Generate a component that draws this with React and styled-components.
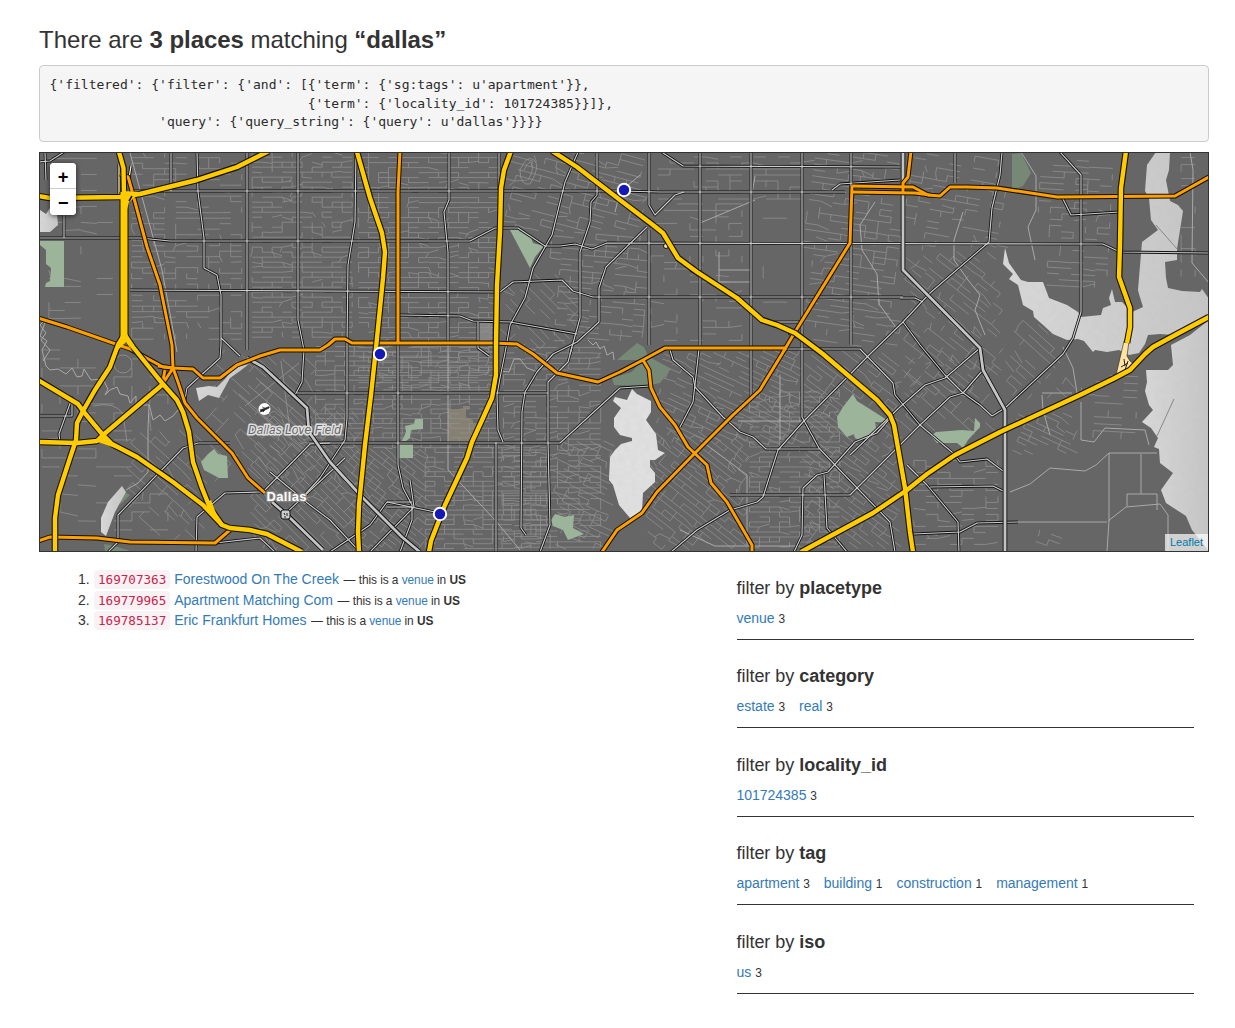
import React from 'react';
import styled, { createGlobalStyle } from 'styled-components';

const Global = createGlobalStyle`
  * { box-sizing: border-box; }
  body {
    margin: 0;
    background: #fff;
    color: #333;
    font: 14px/20px "Liberation Sans", Arial, sans-serif;
  }
`;

const Page = styled.main`
  width: 1170px;
  margin: 26px 0 0 39px;
`;
const Title = styled.h1`
  margin: 0;
  height: 39px;
  font-size: 24px;
  line-height: 28px;
  font-weight: 400;
  letter-spacing: -0.03px;
  white-space: nowrap;
`;
const Query = styled.pre`
  margin: 0 0 10px;
  height: 77px;
  padding: 10px 9.5px;
  border: 1px solid #ccc;
  border-radius: 4px;
  background: #f5f5f5;
  color: #2b2b2b;
  font: 13px/18.57px "DejaVu Sans Mono", monospace;
`;
const MapBox = styled.section`
  position: relative;
  height: 400px;
  border: 1px solid #333;
  background: #666;
  overflow: hidden;
`;
const MapArt = styled.svg`
  display: block;
  width: 1168px;
  height: 398px;
`;
const ZoomControl = styled.div`
  position: absolute;
  left: 10px;
  top: 10px;
  width: 26px;
  border-radius: 4px;
  background: #fff;
  box-shadow: 0 1px 5px rgba(0, 0, 0, 0.65);
  overflow: hidden;
`;
const ZoomButton = styled.button`
  display: block;
  width: 26px;
  height: 26px;
  padding: 2px 0 0;
  border: 0;
  border-bottom: ${(p) => (p.$divided ? '1px solid #ccc' : '0')};
  background: #fff;
  color: #000;
  font: bold 17px/22px "DejaVu Sans Mono", monospace;
  text-align: center;
`;
const MinusButton = styled(ZoomButton)`
  padding: 0;
`;
const Attribution = styled.div`
  position: absolute;
  right: 0;
  bottom: 0;
  width: 43px;
  height: 17px;
  padding-left: 5px;
  background: rgba(255, 255, 255, 0.7);
  color: #0078a8;
  font-size: 11px;
  line-height: 17px;
`;
const Columns = styled.div`
  display: grid;
  grid-template-columns: 682.5px 487.5px;
`;
const Results = styled.ol`
  margin: 0;
  padding: 17px 15px 0 55px;
  list-style: none;
`;
const Result = styled.li`
  display: flex;
  align-items: baseline;
  height: 20.5px;
  line-height: 20px;
  white-space: pre;
`;
const Index = styled.span`
  width: 16px;
  margin-left: -16px;
`;
const PlaceId = styled.code`
  margin-right: 4px;
  padding: 2px 4px;
  border-radius: 4px;
  background: #f9f2f4;
  color: #c7254e;
  font: 12.6px/15px "DejaVu Sans Mono", monospace;
`;
const Link = styled.a`
  color: #337ab7;
`;
const Small = styled.small`
  font-size: 11.9px;
`;
const Description = styled(Small)`
  margin-left: 4.6px;
  letter-spacing: -0.06px;
`;
const Filters = styled.aside`
  padding: 26.1px 15px 0;
`;
const Filter = styled.section`
  height: 88.4px;
`;
const FilterTitle = styled.h4`
  margin: 0 0 10px;
  font-size: 18px;
  line-height: 20px;
  font-weight: 400;
  letter-spacing: -0.03px;
`;
const Terms = styled.div`
  display: flex;
  gap: 14px;
  height: 32px;
  border-bottom: 1px solid #333;
  letter-spacing: -0.02px;
  white-space: pre;
`;

/* Highway geometry, in page pixels. */
const motorways = [
  '119,152 123.5,168 124,197 124,335 118,345 110,367 95,390 83,411 77,423 76,440 70,458 58,495 55,518 55,552',
  '125,335 133,347 145,362 162,383 177,400 183,412 189,432 193,462 202,488 210,508 222,525 230,528 250,530 267,534 302,552',
  '38,196 50,198 120,197 140,194 197,180 237,167 269,151',
  '38,380 78,404 83,411 103,435 112,444 137,457 173,482 203,505 222,525',
  '38,442 77,443 97,441 103,435 162,385',
  '357,152 370,198 382,233 385,252 383,278 376,348 371,395 365,445 359,505 358,532 359,552',
  '511,151 504,170 501,188 500,232 497,285 496,345 496,375 492,398 483,418 472,442 467,458 445,505 431,541 429,552',
  '552,151 577,167 620,200 653,225 663,233 678,258 697,272 737,298 762,320 777,325 795,333 823,354 850,377 877,400 890,415 894,425 905,488 910,532 913,552',
  '1209,317 1177,334 1153,347 1145,354 1130,370 1113,379 1080,395 1000,432 955,455 927,474 907,490 873,513 801,552',
  '1126,151 1121,188 1120,245 1119,277 1130,308 1130,327 1127,343',
];
const trunks = [
  '38,318 67,327 130,349 163,367 173,368 193,369 203,378 220,378 237,365 260,356 280,350 320,350 328,345 335,339 345,339 352,343 493,343 517,344 533,354 557,373 598,382 620,372 643,360 665,348 787,348',
  '120,174 128,177 129,180 135,202 147,247 160,285 172,345 173,368 178,382 185,403 197,418 232,453 248,478 265,493',
  '400,151 398,192 398,342',
  '911,151 908,177 903,183 903,193',
  '852,186 913,187 928,195 940,196 950,187 967,187 997,188 1057,197 1175,196 1209,177',
  '852,192 915,193 930,195',
  '852,186 850,243 795,332 782,354 760,390 733,415 695,453 657,492 642,513 617,530 602,552',
  '643,360 649,370 651,388 660,407 675,425 688,447 707,465 711,483 727,502 752,545 752,552',
  '38,541 50,537 97,538 130,542 215,543 230,530',
  '165,370 162,385 173,368 158,366',
];
const arterials = [
  '130,191 620,191 660,192 845,192', '38,238 140,238 170,241 470,241 495,228 518,228 545,246 560,246 575,244 592,249 607,243 1103,244 1120,252 1209,253',
  '130,290 500,292 513,282 562,280 573,291 593,297 903,297', '400,315 460,316 473,321 510,322 577,334',
  '297,393 548,393', '309,443 560,443 620,388 650,386', '660,151 683,166 900,167',
  '171,152 171,191', '197,152 198,192 204,238 204,268 217,275 221,295 221,345 220,358 187,388 184,405', '221,338 240,356',
  '247,152 247,350', '298,152 298,320 304,350 302,382 294,397', '356,152 355,222 348,265 347,345 347,418 345,440 320,478 300,500',
  '449,152 449,200 444,212 448,252 448,345', '398,345 398,465 403,488 412,505 412,520 400,552',
  '578,152 565,182 552,235 533,268 525,298 510,325 505,353 500,378 497,395 498,430 503,442', '496,442 496,552', '499,152 499,190',
  '597,152 597,195 591,202 590,222 580,252 580,318 570,354', '647,227 606,267 599,288 599,322 577,342 553,354 537,372 525,392 522,412 521,528 526,535',
  '649,152 649,205 655,215 675,195 684,192', '649,230 649,345', '700,152 700,345', '751,152 751,398', '802,152 802,417 819,448 835,465 890,522 895,552',
  '851,152 851,345', '955,152 955,183', '1002,152 1000,175 992,208 989,242 930,293 903,322 870,354 803,422 778,450 763,497 757,502 730,510 697,530 671,552',
  '1060,152 1081,175 1081,312 1073,338 1063,354 1005,408 992,416 980,405 962,392 945,375 920,345 903,322',
  '980,348 945,378 925,385 900,407 850,455', '983,370 963,393 950,397 920,425 850,495 730,495',
  '787,349 860,349 893,383 895,395 920,425 953,453 960,462 987,459 1003,471',
  '670,350 673,360 693,377 695,387 723,417 740,432 753,437 766,449 819,449', '699,349 693,402 680,427',
  '892,416 877,433 855,442 828,472 817,475 803,488 802,535 794,552', '824,475 827,528 847,552',
  '907,465 927,485 958,522 959,552', '930,487 993,486 1003,491', '913,534 960,532 977,523 1018,522',
  '230,443 198,443 183,448 118,515 118,542 108,552', '38,416 72,416 72,398 59,434 60,442', '260,492 225,493 197,517 196,552',
  '263,492 310,444 330,443', '270,472 310,505 330,520 360,552', '285,514 345,458', '435,512 387,502 370,525 330,552',
  '410,480 414,507 370,552', '387,502 412,502', '387,507 412,507', '572,347 568,362 548,382 548,442 550,525 540,552', '38,162 50,161 64,152',
  '45,152 46,180', '64,190 64,238', '215,543 260,538 275,552', '1062,197 1071,215 1120,212', '478,322 478,348 489,356', '900,298 915,298 923,302', '832,190 840,184 900,180', '775,322 800,322',
];
const boulevards = [
  '247,358 263,367 307,408 309,432 330,462 363,498 402,537 420,552', '903,152 903,270 980,348 983,370 1005,410 1005,552',
  '272,502 287,515 323,550',
];
const streams = [
  '46,320 40,336 47,341 42,350 46,366 50,370 58,369 66,374 72,368 77,377 82,376 84,369 91,380 103,379 108,389 105,395 110,390 117,387 120,394 128,396 130,403 136,396 136,404',
  '143,405 149,405 148,430 148,472 138,483 126,490', '45,320 40,325 46,333 41,340 50,350 43,361',
  '1190,152 1193,170 1192,263 1209,283', '130,153 162,270 177,352', '1021,152 1036,176 1036,210 1028,227 1035,260',
  '963,212 954,240 954,260 968,280 980,295 975,310 985,335', '875,202 860,225 862,250 877,274 879,304 895,326',
  '149,404 153,420 160,415 165,421 173,416 178,410 184,411', '588,340 593,345 596,342 600,349 604,346 607,355 613,352 614,360',
  '448,345 448,470 495,520 520,550',
  '500,371 509,372 514,359 520,359 527,368 538,372', '1063,347 1073,368 1077,393',
  '1108,521 1126,507 1160,504 1168,515 1168,551', '1127,506 1127,494 1157,494 1157,510', '1018,522 1107,522',
  '1042,393 1072,393', '1042,395 1043,410 1050,435', '1081,402 1081,440 1094,442 1105,428 1145,430 1149,445',
  '700,440 747,475 747,545', '780,375 780,440', '738,421 803,421', '680,530 715,546 800,546',
  '1010,492 1030,484 1050,468 1085,471 1096,465 1109,453 1157,453', '1109,453 1109,521 1107,551', '1141,454 1141,494',
  '700,223 755,200', '640,175 620,192 615,212', '755,176 751,200', '719,252 719,282 733,282 750,282', '719,270 750,270',
];
const water = [
  '1156,152 1170,152 1169,170 1166,180 1170,201 1178,205 1183,211 1180,230 1177,249 1177,260 1165,262 1166,278 1168,288 1182,291 1200,292 1202,289 1209,299 1209,315 1174,335 1160,334 1148,335 1145,344 1139,353 1129,355 1119,350 1107,352 1095,350 1093,352 1084,341 1078,339 1067,340 1053,334 1042,324 1034,317 1033,311 1023,305 1018,285 1009,279 1013,274 1003,264 1005,248 1009,263 1021,280 1028,282 1043,282 1049,298 1067,305 1078,312 1081,317 1101,315 1103,308 1111,305 1109,298 1112,289 1115,302 1122,302 1132,312 1143,307 1139,294 1138,290 1142,242 1158,230 1151,220 1149,198 1145,191 1147,165',
  '1209,320 1190,335 1171,345 1173,365 1168,370 1146,370 1147,382 1145,391 1149,405 1153,410 1142,422 1151,428 1158,438 1154,447 1159,449 1160,463 1173,473 1161,490 1166,503 1186,516 1192,530 1209,551',
  '196,388 209,386 217,387 226,378 233,368 249,364 240,371 230,378 219,398 208,395 199,401',
  '122,486 126,492 115,512 106,536 101,532 101,518 108,502', '40,210 46,214 50,208 57,214 58,225 50,232 40,232',
];
const whiteRock = '632,389 637,394 651,401 651,412 646,420 656,434 658,450 665,453 655,460 650,460 650,467 655,473 655,482 643,493 642,511 630,518 619,505 613,485 609,480 610,457 615,450 621,444 632,441 632,438 620,435 614,427 614,418 621,408 613,401 615,397 627,400';
const parks = [
  ['510,230 518,230 531,238 533,243 544,246 535,257 530,268'], ['40,241 64,241 64,287 45,287 46,283 50,281 51,268 46,264 46,250 40,245'],
  ['853,394 857,401 873,411 887,420 889,423 875,422 877,433 867,437 859,440 855,438 854,434 847,437 838,427 837,417 843,407'], ['931,436 936,432 962,430 974,431 975,418 980,423 980,427 968,440 963,448 957,443 937,443'],
  ['201,462 208,454 214,449 218,454 227,456 228,478 219,478 204,470'], ['402,441 406,432 405,426 414,424 415,419 423,419 423,429 411,430 410,438 406,441'],
  ['399,444 413,444 413,458 399,458'], ['551,520 555,514 565,517 574,515 573,528 584,534 568,540 563,530 553,526'],
  ['617,360 637,343 644,347 648,356 671,369 660,383 645,386 614,385 612,378 632,372 642,360', 1],
  ['1012,154 1021,153 1031,173 1023,186 1018,188 1012,188', 1], ['123,491 130,495 120,505', 1], ['104,544 115,546 130,551 105,551', 1],
];

/* Blocks of local streets: left, top, width, height, grid angle, pitch, share of blocks that are built up. */
const districts = [
  [40, 152, 84, 175, 0, 8, 0.28], [130, 152, 116, 190, 0, 5.5, 0.48], [247, 152, 110, 190, 0, 5, 0.74],
  [357, 152, 142, 240, 0, 5, 0.76], [500, 152, 150, 80, 15, 6, 0.66], [550, 232, 100, 110, 5, 5.5, 0.64],
  [500, 270, 80, 80, 45, 7, 0.5], [650, 152, 152, 50, 0, 6, 0.55], [650, 200, 100, 145, 0, 6.5, 0.38], [750, 200, 52, 110, 0, 12, 0.3],
  [802, 152, 100, 195, 8, 6, 0.66], [903, 152, 105, 100, 10, 6, 0.5], [903, 250, 100, 150, 38, 6, 0.6],
  [1038, 160, 80, 130, 3, 6, 0.58], [1180, 152, 28, 135, 0, 7, 0.5], [1005, 320, 70, 80, 42, 7, 0.45],
  [40, 345, 140, 200, 0, 9, 0.28], [125, 430, 85, 110, 42, 7, 0.5], [205, 350, 115, 135, 42, 8, 0.45],
  [250, 405, 110, 146, 45, 5.5, 0.78], [310, 345, 190, 105, 0, 4.8, 0.82], [350, 445, 80, 106, 38, 5, 0.82],
  [425, 445, 130, 106, 0, 4.8, 0.86], [500, 345, 110, 205, 0, 5.4, 0.75], [550, 440, 65, 110, 25, 6, 0.7],
  [655, 350, 150, 95, 25, 5.5, 0.7], [645, 430, 105, 120, 38, 5.5, 0.78], [745, 390, 95, 160, 0, 5, 0.78],
  [802, 350, 100, 200, 37, 5.5, 0.72], [910, 455, 92, 95, 0, 6, 0.53], [1010, 410, 68, 46, 25, 5, 0.65],
  [1080, 375, 65, 65, 3, 7, 0.4], [1030, 524, 35, 26, 20, 6, 0.5], [900, 350, 100, 90, 42, 8, 0.4],
];

function streetPath([x, y, w, h, angle, pitch, density], seed) {
  let state = seed * 7919 + 17;
  const random = () => {
    state = (state * 16807) % 2147483647;
    return state / 2147483647;
  };
  const a = (angle * Math.PI) / 180;
  const c = Math.cos(a);
  const s = Math.sin(a);
  const r = Math.hypot(w, h) / 2;
  const at = (u, v) => [x + w / 2 + u * c - v * s, y + h / 2 + u * s + v * c];
  const inside = ([px, py]) => px >= x && px <= x + w && py >= y && py <= y + h;
  const step = pitch * 2;
  let d = '';
  const line = (p, q) => {
    if (inside(p) && inside(q)) d += `M${p.map((n) => n.toFixed(1))}L${q.map((n) => n.toFixed(1))}`;
  };
  for (let v = -r; v < r; v += pitch) {
    for (let u = -r; u < r; u += step) {
      const bend = random() < 0.16 ? (random() - 0.5) * pitch * 1.5 : 0;
      if (random() < density) line(at(u, v), at(u + step, v + bend));
      if (random() < density * 0.48) line(at(u, v), at(u + bend, v + pitch));
    }
  }
  return d;
}

function Lines({ items, stroke, width, ...rest }) {
  return (
    <g fill="none" stroke={stroke} strokeWidth={width} strokeLinejoin="round" {...rest}>
      {items.map((points, i) => <polyline key={i} points={points} />)}
    </g>
  );
}

function DallasMap() {
  return (
    <MapArt viewBox="40 153 1168 398" role="img" aria-label="Map of Dallas">
      <defs>
        <linearGradient id="lake" x1="0" x2="1">
          <stop offset="0" stopColor="#d8d8d8" />
          <stop offset="0.6" stopColor="#cdcdcd" />
          <stop offset="1" stopColor="#c5c5c5" />
        </linearGradient>
        <filter id="grain" x="0" y="0" width="100%" height="100%">
          <feTurbulence type="fractalNoise" baseFrequency="0.16" numOctaves="2" seed="4" result="noise" />
          <feColorMatrix in="noise" type="matrix" values="0 0 0 0 0.5  0 0 0 0 0.5  0 0 0 0 0.5  0.28 0 0 0 -0.09" result="shade" />
          <feComposite in="shade" in2="SourceGraphic" operator="in" result="tint" />
          <feMerge><feMergeNode in="SourceGraphic" /><feMergeNode in="tint" /></feMerge>
        </filter>
      </defs>
      <rect x="40" y="153" width="1168" height="398" fill="#666" />
      <path d="M448 409h15v-3h7v3h-4v8l7 3v4h5l-7 19h-23z" fill="#858071" />
      <rect x="479" y="322" width="13" height="20" fill="#858585" />
      <g fill="none" stroke="#929292" strokeWidth="0.75">
        {districts.map((zone, i) => <path key={i} d={streetPath(zone, i + 1)} />)}
      </g>
      <g fill="none" stroke="#969696" strokeWidth="0.8">
        <path d="M248 385l74 64M239 394l74 64M256 378l67 56M245 406l54-43M290 430l-9-69" />
        <circle cx="123" cy="364" r="9" /><path d="M93 406q22-5 30 8l4 28" />
        <path d="M520 170q7-16 14-10t-4 24q-10 2-10-14m4 0q6-12 8-6t-4 16" />
      </g>
      {parks.map(([points, dark]) => <polygon key={points} points={points} fill={dark ? '#768976' : '#9bb49a'} />)}
      <Lines items={streams} stroke="#a9a9a9" width={1} />
      <g filter="url(#grain)">{water.map((p) => <polygon key={p} points={p} fill="url(#lake)" />)}</g>
      <polygon points={whiteRock} fill="#e0e0e0" filter="url(#grain)" />
      <path d="M1156 225l22 25M1174 399l-17 37" fill="none" stroke="#888" />
      <Lines items={arterials} stroke="#111" width={2.8} />
      <Lines items={arterials} stroke="#cecece" width={1.15} />
      <Lines items={boulevards} stroke="#111" width={4.6} />
      <Lines items={boulevards} stroke="#c4c4c4" width={2.8} />
      <rect x="281" y="510" width="9" height="9" rx="2" fill="#ccc" stroke="#111" />
      <path d="M284 513l1 2m2-2v3m-3 1h2" stroke="#222" />
      <path d="M119 164v34M131 166l-2 12" fill="none" stroke="#111" strokeWidth="3" />
      <path d="M119 164v34M131 166l-2 12" fill="none" stroke="#ffe9b8" strokeWidth="1.3" />
      <path d="M1124 341h5l-2 15 3 5 5 4-10 6-9 4z" fill="#ffe3a0" stroke="#222" strokeWidth="0.6" />
      <path d="M1124 359l1 7m3-5l-3 9m-4-3l7-4" stroke="#222" fill="none" />
      <g stroke="#111" strokeWidth="1" fill="#ffe3a0"><circle cx="666" cy="246" r="2.5" /><path d="M690 271l8 5M788 334l8 4 4-5" /></g>
      <Lines items={trunks} stroke="#151000" width={5} />
      <Lines items={trunks} stroke="#ff9f00" width={3} />
      <Lines items={motorways} stroke="#151000" width={6.6} />
      <polyline points="124,192 124,338" stroke="#151000" strokeWidth="9" />
      <Lines items={motorways} stroke="#fc0" width={4.4} />
      <polyline points="124,192 124,338" stroke="#fc0" strokeWidth="7" />
      <path d="M122 191l20 1-13 10-3 11zM94 441l9-8 10 12 5 4-14-5zM118 350l6-17 8 18-6-9zM207 502l4-2 8 21-8-8z" fill="#fc0" />
      <path d="M129 201l3-5" stroke="#111" strokeWidth="1.5" />
      <circle cx="264.5" cy="409" r="6" fill="#fff" />
      <path d="M260 410l8-3q2-1 1 1l-4 2-2 2v-1l-3 1 1-2zM262 407l3 1" fill="#222" stroke="#222" strokeWidth="0.6" />
      <g fontFamily="Liberation Sans, Arial, sans-serif" strokeLinejoin="round" paintOrder="stroke">
        <text x="248" y="434" fontSize="12" fontStyle="italic" fill="#666" stroke="#dedede" strokeWidth="3.2" textLength="93">Dallas Love Field</text>
        <text x="266.5" y="501" fontSize="13" fontWeight="700" fill="#fff" stroke="#858585" strokeWidth="2.4" textLength="40">Dallas</text>
      </g>
      <g fill="#1419b7" stroke="#fff" strokeWidth="2">
        <circle cx="624" cy="190" r="6.2" /><circle cx="380" cy="354" r="6.2" /><circle cx="440" cy="514" r="6.2" />
      </g>
    </MapArt>
  );
}

const places = [
  ['169707363', 'Forestwood On The Creek'],
  ['169779965', 'Apartment Matching Com'],
  ['169785137', 'Eric Frankfurt Homes'],
];
const filters = [
  ['placetype', [['venue', 3]]],
  ['category', [['estate', 3], ['real', 3]]],
  ['locality_id', [['101724385', 3]]],
  ['tag', [['apartment', 3], ['building', 1], ['construction', 1], ['management', 1]]],
  ['iso', [['us', 3]]],
];
const query = `{'filtered': {'filter': {'and': [{'term': {'sg:tags': u'apartment'}},
                                 {'term': {'locality_id': 101724385}}]},
              'query': {'query_string': {'query': u'dallas'}}}}`;

export default function App() {
  return (
    <>
      <Global />
      <Page>
        <Title>There are <b>3 places</b> matching <b>“dallas”</b></Title>
        <Query>{query}</Query>
        <MapBox>
          <DallasMap />
          <ZoomControl>
            <ZoomButton $divided aria-label="Zoom in">+</ZoomButton>
            <MinusButton aria-label="Zoom out">−</MinusButton>
          </ZoomControl>
          <Attribution>Leaflet</Attribution>
        </MapBox>
        <Columns>
          <Results>
            {places.map(([id, name], i) => (
              <Result key={id}>
                <Index>{i + 1}.</Index>
                <PlaceId>{id}</PlaceId>
                <Link>{name}</Link>
                <Description>— this is a <Link>venue</Link> in <b>US</b></Description>
              </Result>
            ))}
          </Results>
          <Filters>
            {filters.map(([name, terms]) => (
              <Filter key={name}>
                <FilterTitle>filter by <b>{name}</b></FilterTitle>
                <Terms>
                  {terms.map(([term, count]) => (
                    <span key={term}><Link>{term}</Link> <Small>{count}</Small></span>
                  ))}
                </Terms>
              </Filter>
            ))}
          </Filters>
        </Columns>
      </Page>
    </>
  );
}
